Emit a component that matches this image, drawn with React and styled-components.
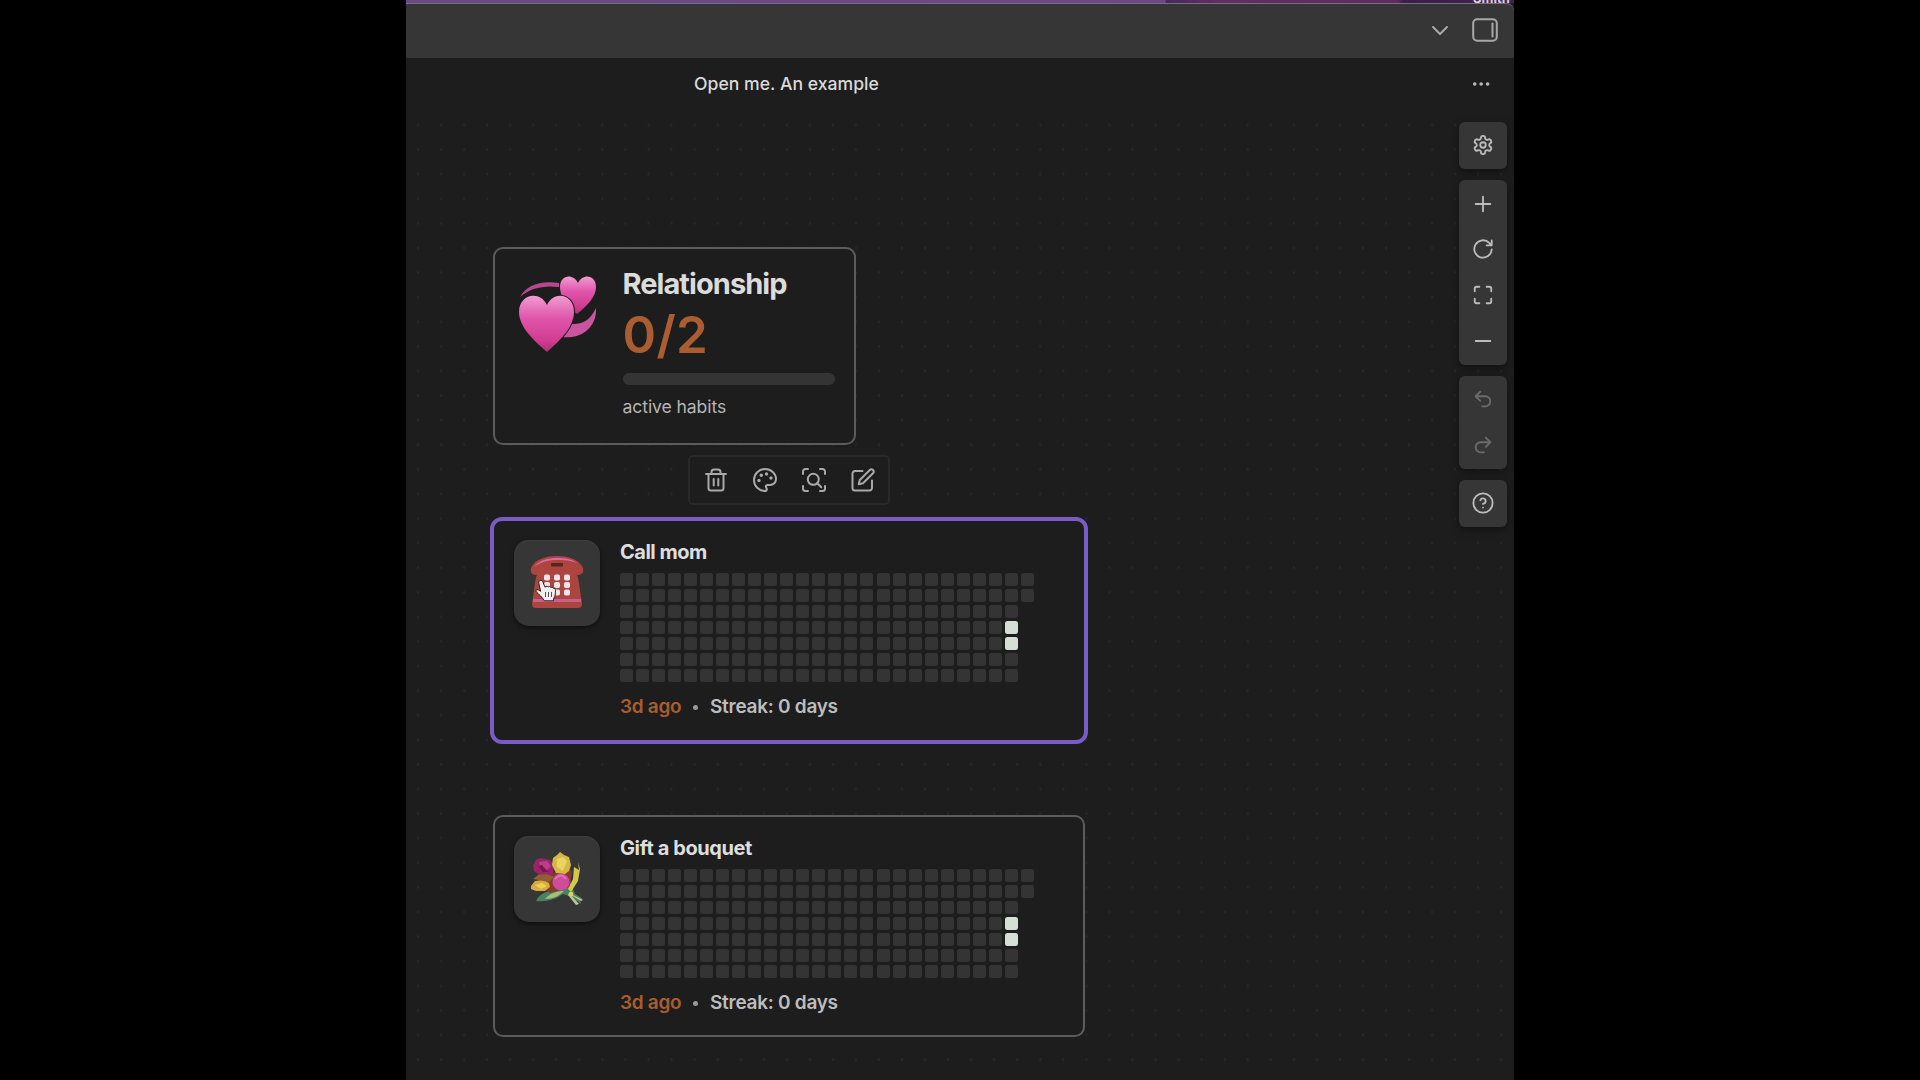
import React from "react";
import styled, { createGlobalStyle, css } from "styled-components";

const Global = createGlobalStyle`
  html, body { margin: 0; background: #000; }
  *, *::before, *::after { box-sizing: border-box; }
  body { font-family: Inter, "Liberation Sans", sans-serif; overflow: hidden; }
`;

const Stage = styled.div`
  width: 1920px;
  height: 1080px;
  display: flex;
  justify-content: center;
  background: #000;
`;

const AppWindow = styled.div`
  width: 1108px;
  height: 1080px;
  display: flex;
  flex-direction: column;
  background: #1d1d1d;
  overflow: hidden;
`;

const Wallpaper = styled.div`
  height: 3px;
  flex: none;
  display: flex;
  justify-content: flex-end;
  background: linear-gradient(90deg, #6a4a82 0%, #6d4888 68.5%, #452a5c 68.6%, #622d60 73%, #5e2c5c 89.5%, #3a2048 90%, #43224f 100%);
`;

const Behind = styled.span`
  height: 3px;
  width: 40px;
  margin-right: 1px;
  display: flex;
  align-items: flex-end;
  font-size: 13px;
  line-height: 10px;
  font-weight: 700;
  color: #d8d0dc;
`;

const TitleBar = styled.header`
  height: 55px;
  flex: none;
  display: flex;
  align-items: center;
  justify-content: flex-end;
  gap: 20px;
  padding: 0 16px 2px 0;
  background: #363636;
  border-top: 1px solid #7b6c80;
  border-top-right-radius: 8px;
`;

const Tab = styled.div`
  height: 52px;
  flex: none;
  display: grid;
  grid-template-columns: 288px 1fr auto;
  align-items: center;
  padding-right: 23px;
`;

const TabTitle = styled.h1`
  grid-column: 2;
  margin: 0;
  font-size: 17.6px;
  line-height: 24px;
  font-weight: 500;
  letter-spacing: 0.02px;
  color: #dadada;
`;

const Canvas = styled.main`
  flex: 1;
  position: relative;
  display: flex;
  justify-content: flex-end;
  align-items: flex-start;
  padding: 12px 7px 0 0;
  background-image: radial-gradient(circle, #282828 0.9px, transparent 1.5px);
  background-size: 23.05px 24.6px;
  background-position: 0.5px 2.7px;
`;

const Controls = styled.aside`
  display: flex;
  flex-direction: column;
  gap: 11px;
`;

const ControlGroup = styled.div`
  width: 48px;
  display: flex;
  flex-direction: column;
  background: #363636;
  border-radius: 6px;
  box-shadow: 0 3px 8px rgba(0, 0, 0, 0.4);
  padding: 0.5px 0 1px;
`;

const ControlButton = styled.button`
  all: unset;
  height: 45.75px;
  display: flex;
  align-items: center;
  justify-content: center;
  color: ${(p) => (p.$muted ? "#6b6b6b" : "#bcbcbc")};
`;

const Icon = styled.svg.attrs((p) => ({ viewBox: p.viewBox || "0 0 24 24" }))`
  display: block;
  width: ${(p) => p.$size || 24}px;
  height: ${(p) => p.$size || 24}px;
  fill: none;
  stroke: currentColor;
  stroke-width: ${(p) => p.$weight || 2};
  stroke-linecap: round;
  stroke-linejoin: round;
  color: ${(p) => p.$tone || "inherit"};
`;

const Node = styled.section`
  position: absolute;
  left: ${(p) => p.$x}px;
  top: ${(p) => p.$y}px;
  width: ${(p) => p.$w}px;
  height: ${(p) => p.$h}px;
  display: flex;
  align-items: flex-start;
  background: #1d1d1d;
  border: 2px solid #5c5c5c;
  border-radius: 10px;
  ${(p) =>
    p.$selected &&
    css`
      border: 4px solid #7a5cc6;
      border-radius: 12px;
    `}
`;

const SummaryEmoji = styled.div`
  flex: none;
  width: 128px;
  padding: 27px 0 0 23px;
`;

const SummaryBody = styled.div`
  flex: 1;
  padding: 17px 19px 0 0;
  display: flex;
  flex-direction: column;
`;

const SummaryTitle = styled.h2`
  margin: 0;
  font-size: 29px;
  line-height: 36px;
  font-weight: 700;
  letter-spacing: -0.95px;
  color: #dcdcdc;
`;

const Count = styled.div`
  font-size: 51px;
  line-height: 60px;
  margin-top: 3px;
  font-weight: 600;
  letter-spacing: 0.3px;
  color: #a95d30;
`;

const Track = styled.div`
  height: 12px;
  margin-top: 7.5px;
  border-radius: 6px;
  background: #343434;
`;

const Caption = styled.div`
  margin-top: 10.5px;
  font-size: 17.6px;
  line-height: 24px;
  font-weight: 400;
  letter-spacing: -0.1px;
  color: #b6b6b6;
`;

const Toolbar = styled.div`
  position: absolute;
  left: 282px;
  top: 345px;
  width: 202px;
  height: 50px;
  display: flex;
  align-items: center;
  justify-content: center;
  gap: 24.8px;
  padding-left: 1px;
  border: 2px solid #292929;
  border-radius: 5px;
  background: #1d1d1d;
  color: #a9a9a9;
`;

const Badge = styled.div`
  position: relative;
  flex: none;
  width: 86px;
  height: 86px;
  margin: ${(p) => p.$top}px 20px 0 ${(p) => p.$left}px;
  display: flex;
  align-items: center;
  justify-content: center;
  padding-bottom: 3px;
  background: #363636;
  border-radius: 15px;
  box-shadow: 0 2px 5px rgba(0, 0, 0, 0.5), inset 0 1px 0 #3e3e3e;
`;

const Pointer = styled.svg`
  position: absolute;
  left: 21px;
  top: 39px;
  width: 22px;
  height: 23px;
`;

const HabitBody = styled.div`
  display: flex;
  flex-direction: column;
  padding-top: ${(p) => p.$top}px;
`;

const HabitTitle = styled.h3`
  margin: 0;
  font-size: 20px;
  line-height: 24px;
  font-weight: 700;
  letter-spacing: ${(p) => p.$track}px;
  color: #dedede;
`;

const Heatmap = styled.div`
  display: grid;
  grid-auto-flow: column;
  grid-template-rows: repeat(7, 13px);
  grid-auto-columns: 13px;
  gap: 3.04px;
  margin-top: 9px;
`;

const Day = styled.i`
  border-radius: 2.5px;
  background: ${(p) => (p.$done ? "#d5e0d5" : "#343434")};
`;

const Meta = styled.div`
  display: flex;
  align-items: center;
  margin-top: 13px;
  font-size: 19px;
  line-height: 24px;
  font-weight: 600;
  color: #bdbdbd;
`;

const Ago = styled.span`
  width: 62px;
  color: #a95d30;
  letter-spacing: -0.3px;
  white-space: nowrap;
`;

const Dot = styled.span`
  width: 5px;
  height: 5px;
  margin: 1px 12px 0 11px;
  border-radius: 50%;
  background: #9a9a9a;
`;

const Streak = styled.span`
  letter-spacing: -0.27px;
`;

const Hearts = () => (
  <svg width="78" height="77" viewBox="0 0 78 77">
    <defs>
      <linearGradient id="heart" x1="0" y1="0" x2="0" y2="1">
        <stop offset="0" stopColor="#f29bd0" />
        <stop offset="0.4" stopColor="#df55ab" />
        <stop offset="0.8" stopColor="#d03c90" />
        <stop offset="1" stopColor="#a93472" />
      </linearGradient>
    </defs>
    <path d="M2 21C8 9 23 4 41 7v4C26 9 12 12 2 21z" fill="#b8478f" />
    <path d="M78 32c1 17-12 31-33 29l8-13c12 1 20-5 25-16z" fill="#c9559f" />
    <path d="M59 38C48 29 42 20 42 11c0-12 13-14 18-4 5-10 18-8 18 4 0 10-9 19-19 27z" fill="url(#heart)" />
    <path d="M29 76C14 63 1 50 1 36c0-18 21-22 28-7 7-15 27-11 27 7 0 14-12 27-27 40z" fill="#1d1d1d" stroke="#1d1d1d" strokeWidth="2" />
    <path d="M29 76C14 63 1 50 1 36c0-18 21-22 28-7 7-15 27-11 27 7 0 14-12 27-27 40z" fill="url(#heart)" />
  </svg>
);

const Phone = () => (
  <svg width="54" height="54" viewBox="0 0 54 54">
    <path d="M7 12h40c-1 6 1 10 2 16l3 21q0 4-4 4H6q-4 0-4-4l3-21c1-6 3-10 2-16z" fill="#ab453f" />
    <path d="M1 13C5 4 16 1 27 1s22 3 26 12c1 4-1 7-5 7-5 0-5-3-9-4-8-2-16-2-24 0-4 1-4 4-9 4-4 0-6-3-5-7z" fill="#ad443e" />
    <path d="M4 12C9 5 18 3 27 3s15 1 20 5C40 5.500 34 5 27 5S12 6 4 12z" fill="#d9699f" />
    <rect x="21" y="8" width="12" height="3.5" rx="1" fill="#532622" />
    <path d="M3 44h48v3H3z" fill="#c8608c" />
    {[19.5, 27, 34.5].map((y) =>
      [14, 24, 34].map((x) => (
        <rect key={`${x}-${y}`} x={x} y={y} width="6" height="6" rx="1.8" fill="#f0e4ea" />
      ))
    )}
  </svg>
);

const Bouquet = () => (
  <svg width="54" height="54" viewBox="0 0 54 54">
    <path d="M6 50c4-8 13-12 28-11l6-9 5 13 8 5-3 1 1 4-9-7-9-3c-7 5-16 8-27 7z" fill="#4c8163" />
    <path d="M15 48c5-6 12-8 19-8-5 5-11 8-19 8z" fill="#a5bf78" />
    <path d="M39 42l14 7-2 1-10-6 8 9-3 1-8-10z" fill="#b9c894" />
    <path d="M8 24l16-2 8-8 10 6-2 16-20 6-10-8z" fill="#843b29" />
    <path d="M3 14l3-5 5-2 9 2 4 5-1 9-5 3-7-1-7-5z" fill="#9b2369" />
    <path d="M9 11l8-1 4 5-5 5-6-3z" fill="#bd3e88" />
    <path d="M8 15l5 6 5 0-6-7z" fill="#741a4b" />
    <path d="M23 7l4-3 3-3 4 3 5 2 2 8-2 6-4 3-9-1-4-8z" fill="#d6b943" />
    <path d="M27 8l6-2 4 4-4 10-6-4z" fill="#e9d363" />
    <path d="M43 28l1-12 5 3-1-8 2 7-2 12-7 11-3-3z" fill="#d2c84a" />
    <circle cx="31" cy="31" r="8.500" fill="#cf4c9b" />
    <path d="M25 28q6-7 11 0" fill="none" stroke="#df72b3" strokeWidth="2" />
    <path d="M1 35l4-5 8-1 6 3 1 4-5 4H6l-5-2z" fill="#d8ad3d" />
    <path d="M5 34l7-2 5 3-6 3z" fill="#edce58" />
    <path d="M3 28l5-4 8-1 8 3-5 5z" fill="#8e6033" />
    <circle cx="41" cy="43" r="2.3" fill="#decf61" />
  </svg>
);

const HandPointer = () => (
  <Pointer viewBox="0 0 22 23">
    <path
      d="M5 1.5c1.5-.7 2.6.4 3 1.7l2 5 1-.8q1.2-.6 2.2.5 1.4-1 2.6.4 1.6-.7 2.5 1c1.3-.3 2.2.6 2.2 2.2 0 3.500-.2 5.500-2 8.500v1.800H9.500C7 18 4 15.500 1.300 12.800c-1-1.200.3-2.600 1.800-2l2.500 1.500L3.800 4C3.600 2.700 4 1.900 5 1.500z"
      fill="#f0eeee"
      stroke="#33201f"
      strokeWidth="1"
    />
    <path d="M10.500 13v5M13.500 13v5M16.500 13v5" stroke="#555" strokeWidth="1" />
  </Pointer>
);

const DAYS = Array.from({ length: 25 * 7 + 2 }, (_, i) => i);
const DONE = new Set([24 * 7 + 3, 24 * 7 + 4]);

function Habit({ title, track, x, y, w, h, selected, badgeTop, badgeLeft, bodyTop, children }) {
  return (
    <Node $x={x} $y={y} $w={w} $h={h} $selected={selected}>
      <Badge $top={badgeTop} $left={badgeLeft}>{children}</Badge>
      <HabitBody $top={bodyTop}>
        <HabitTitle $track={track}>{title}</HabitTitle>
        <Heatmap>
          {DAYS.map((d) => (
            <Day key={d} $done={DONE.has(d)} />
          ))}
        </Heatmap>
        <Meta>
          <Ago>3d ago</Ago>
          <Dot />
          <Streak>Streak: 0 days</Streak>
        </Meta>
      </HabitBody>
    </Node>
  );
}

export default function App() {
  return (
    <>
      <Global />
      <Stage>
        <AppWindow>
          <Wallpaper>
            <Behind>Smith</Behind>
          </Wallpaper>
          <TitleBar>
            <Icon $size={24} $tone="#a8a8a8" $weight={2}>
              <path d="M5 9l7 7 7-7" />
            </Icon>
            <Icon viewBox="0 0 26 26" $size={26} $tone="#a8a8a8" $weight={2}>
              <rect x="1.200" y="2.200" width="23.600" height="21.600" rx="4" />
              <path d="M20.500 6.500v13" />
            </Icon>
          </TitleBar>
          <Tab>
            <TabTitle>Open me. An example</TabTitle>
            <Icon $size={20} $tone="#b8b8b8">
              <g fill="currentColor" stroke="none">
                <circle cx="4.500" cy="12" r="2.200" />
                <circle cx="12.200" cy="12" r="2.200" />
                <circle cx="19.900" cy="12" r="2.200" />
              </g>
            </Icon>
          </Tab>
          <Canvas>
            <Node $x={86.5} $y={137} $w={363.5} $h={198}>
              <SummaryEmoji>
                <Hearts />
              </SummaryEmoji>
              <SummaryBody>
                <SummaryTitle>Relationship</SummaryTitle>
                <Count>0/2</Count>
                <Track />
                <Caption>active habits</Caption>
              </SummaryBody>
            </Node>

            <Toolbar>
              <Icon>
                <path d="M2 6h20M4.500 6v14a2.500 2.500 0 0 0 2.500 2.500h10a2.500 2.500 0 0 0 2.500-2.500V6M7.500 6V4A2.500 2.500 0 0 1 10 1.500h4A2.500 2.500 0 0 1 16.500 4v2M9.700 11v6.500M14.300 11v6.500" />
              </Icon>
              <Icon>
                <path d="M12 1C5.900 1 1 5.900 1 12s4.900 11 11 11c1 0 1.800-.8 1.800-1.800 0-.5-.2-.9-.5-1.200-.3-.3-.4-.7-.4-1.200 0-1 .8-1.800 1.800-1.800H17c3.400 0 6-2.700 6-6C23 5.400 18 1 12 1z" />
                <g fill="currentColor" stroke="none">
                  <circle cx="6" cy="12.500" r="1.700" />
                  <circle cx="8.300" cy="7.300" r="1.700" />
                  <circle cx="13.500" cy="6" r="1.700" />
                  <circle cx="18" cy="10" r="1.700" />
                </g>
              </Icon>
              <Icon>
                <path d="M1 6V3.500A2.500 2.500 0 0 1 3.500 1H6M18 1h2.500A2.500 2.500 0 0 1 23 3.500V6M23 18v2.500a2.500 2.500 0 0 1-2.500 2.500H18M6 23H3.500A2.500 2.500 0 0 1 1 20.500V18" />
                <circle cx="11.300" cy="11.300" r="5.500" />
                <path d="M15.300 15.300l4 4" />
              </Icon>
              <Icon>
                <path d="M11.500 3H4a2.500 2.500 0 0 0-2.500 2.500v14.500A2.500 2.500 0 0 0 4 22.500h14.500A2.500 2.500 0 0 0 21 20v-7.500" />
                <path d="M18.800 2a2.200 2.200 0 0 1 3.200 3.200L12 15.200l-4.300 1.100L8.800 12z" />
              </Icon>
            </Toolbar>

            <Habit title="Call mom" track={-0.5} x={84} y={406.5} w={598} h={227.5} selected badgeTop={19.5} badgeLeft={20} bodyTop={19.5}>
              <Phone />
              <HandPointer />
            </Habit>
            <Habit title="Gift a bouquet" track={-0.4} x={86.5} y={705} w={592.5} h={222} badgeTop={19} badgeLeft={19.5} bodyTop={18.5}>
              <Bouquet />
            </Habit>

            <Controls>
              <ControlGroup>
                <ControlButton>
                  <Icon $size={22}>
                    <path d="M12.220 2h-.44a2 2 0 0 0-2 2v.18a2 2 0 0 1-1 1.730l-.43.25a2 2 0 0 1-2 0l-.15-.08a2 2 0 0 0-2.730.73l-.22.38a2 2 0 0 0 .73 2.730l.15.1a2 2 0 0 1 1 1.720v.51a2 2 0 0 1-1 1.740l-.15.09a2 2 0 0 0-.73 2.730l.22.38a2 2 0 0 0 2.730.73l.15-.08a2 2 0 0 1 2 0l.43.25a2 2 0 0 1 1 1.730V20a2 2 0 0 0 2 2h.44a2 2 0 0 0 2-2v-.18a2 2 0 0 1 1-1.730l.43-.25a2 2 0 0 1 2 0l.15.08a2 2 0 0 0 2.730-.73l.22-.39a2 2 0 0 0-.73-2.730l-.15-.08a2 2 0 0 1-1-1.740v-.5a2 2 0 0 1 1-1.740l.15-.09a2 2 0 0 0 .73-2.730l-.22-.38a2 2 0 0 0-2.730-.73l-.15.08a2 2 0 0 1-2 0l-.43-.25a2 2 0 0 1-1-1.730V4a2 2 0 0 0-2-2z" />
                    <circle cx="12" cy="12" r="3" />
                  </Icon>
                </ControlButton>
              </ControlGroup>
              <ControlGroup>
                <ControlButton>
                  <Icon $size={22}>
                    <path d="M4 12h16M12 4v16" />
                  </Icon>
                </ControlButton>
                <ControlButton>
                  <Icon $size={22}>
                    <path d="M21.500 12.500A9.500 9.500 0 1 1 18.800 5.300L21.500 8M21.500 2.500V8H16" />
                  </Icon>
                </ControlButton>
                <ControlButton>
                  <Icon $size={22}>
                    <path d="M3 8V5a2 2 0 0 1 2-2h3M16 3h3a2 2 0 0 1 2 2v3M21 16v3a2 2 0 0 1-2 2h-3M8 21H5a2 2 0 0 1-2-2v-3" />
                  </Icon>
                </ControlButton>
                <ControlButton>
                  <Icon $size={22}>
                    <path d="M4 12h16" />
                  </Icon>
                </ControlButton>
              </ControlGroup>
              <ControlGroup>
                <ControlButton $muted>
                  <Icon $size={22}>
                    <path d="M9 14L4 9l5-5" />
                    <path d="M4 9h10.500a5.500 5.500 0 0 1 0 11H11" />
                  </Icon>
                </ControlButton>
                <ControlButton $muted>
                  <Icon $size={22}>
                    <path d="M15 14l5-5-5-5" />
                    <path d="M20 9H9.500a5.500 5.500 0 0 0 0 11H13" />
                  </Icon>
                </ControlButton>
              </ControlGroup>
              <ControlGroup>
                <ControlButton>
                  <Icon $size={22}>
                    <circle cx="12" cy="12" r="10.500" />
                    <path d="M9.090 9a3 3 0 0 1 5.830 1c0 2-3 3-3 3M12 17h.01" />
                  </Icon>
                </ControlButton>
              </ControlGroup>
            </Controls>
          </Canvas>
        </AppWindow>
      </Stage>
    </>
  );
}
